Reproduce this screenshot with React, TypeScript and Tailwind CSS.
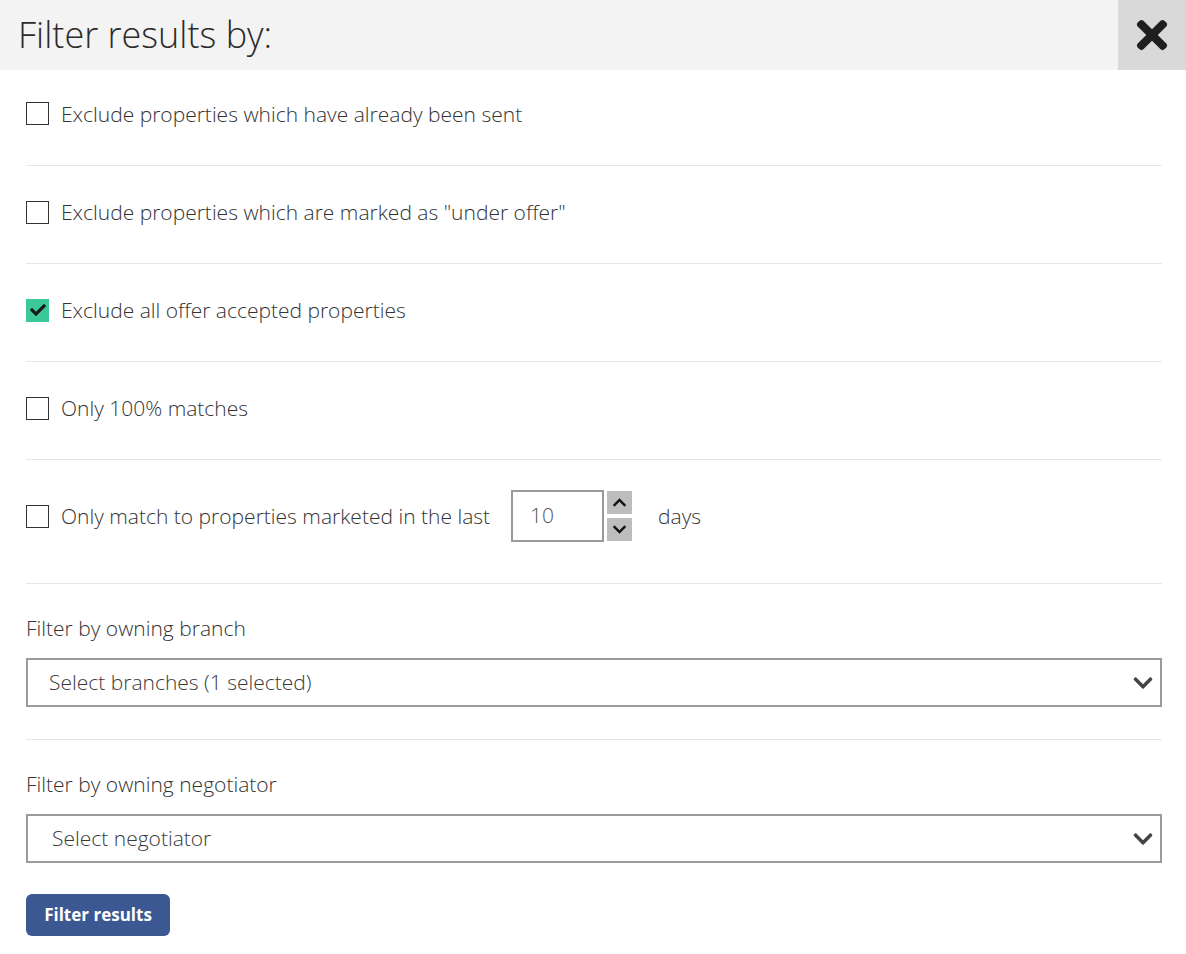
import React, { useState } from 'react';
import { FaTimes, FaChevronDown, FaChevronUp, FaCheck } from 'react-icons/fa';

const OPTIONS = [
    { id: 'sent', label: 'Exclude properties which have already been sent', checked: false },
    { id: 'offer', label: 'Exclude properties which are marked as "under offer"', checked: false },
    { id: 'accepted', label: 'Exclude all offer accepted properties', checked: true },
    { id: 'full', label: 'Only 100% matches', checked: false },
];

const Checkbox: React.FC<{ checked: boolean; onToggle: () => void }> = ({ checked, onToggle }) => (
    <button
        onClick={onToggle}
        className={`w-[23px] h-[23px] shrink-0 flex items-center justify-center ${checked
            ? 'bg-[#3cc99a]'
            : 'border-[1.5px] border-[#333] bg-white'
            }`}
    >
        {checked && <FaCheck size={16} className="text-[#1a1a1a]" />}
    </button>
);

const SelectBox: React.FC<{ text: string; pl: string }> = ({ text, pl }) => (
    <div className={`h-[49px] border-2 border-[#9a9a9a] flex items-center justify-between ${pl} pr-[6px] text-[21px] text-[#3a3a3a]`}>
        <span>{text}</span>
        <FaChevronDown size={22} className="text-[#444]" />
    </div>
);

export default function App() {
    const [checks, setChecks] = useState<Record<string, boolean>>(
        Object.fromEntries(OPTIONS.map(o => [o.id, o.checked]))
    );
    const [lastChecked, setLastChecked] = useState(false);
    const [days, setDays] = useState(10);

    const toggle = (id: string) => setChecks(c => ({ ...c, [id]: !c[id] }));

    return (
        <div className="w-[1186px] min-h-[954px] bg-white text-[#333] font-light font-['Open_Sans',sans-serif]">
            <div className="h-[70px] bg-[#f3f3f3] flex items-stretch justify-between">
                <h2 className="pl-[18px] flex items-center text-[36px] text-[#2b2b2b] font-light">Filter results by:</h2>
                <button className="w-[68px] bg-[#d9d9d9] flex items-center justify-center text-[#1f1f1f]">
                    <FaTimes size={44} />
                </button>
            </div>

            <div className="pl-[26px] pr-[24px]">
                {OPTIONS.map((o, i) => (
                    <div key={o.id} className={`border-b border-[#e6e6e6] flex items-center gap-[12px] ${i === 0 ? 'h-[96px] pb-[8px]' : 'h-[98px] pb-[5px]'}`}>
                        <Checkbox checked={checks[o.id]} onToggle={() => toggle(o.id)} />
                        <span className="text-[21px] leading-[28px] text-[#333]">{o.label}</span>
                    </div>
                ))}

                <div className="pt-[30px] pb-[41px] border-b border-[#e6e6e6] flex items-center">
                    <Checkbox checked={lastChecked} onToggle={() => setLastChecked(v => !v)} />
                    <span className="ml-[12px] text-[21px] leading-[28px]">Only match to properties marketed in the last</span>
                    <div className="ml-[21px] w-[93px] h-[52px] border-2 border-[#9a9a9a] flex items-center pl-[17px] text-[21px] text-[#555]">
                        {days}
                    </div>
                    <div className="ml-[3px] flex flex-col gap-[4px]">
                        <button onClick={() => setDays(d => d + 1)} className="w-[25px] h-[23px] bg-[#bdbdbd] flex items-center justify-center text-[#111]">
                            <FaChevronUp size={15} />
                        </button>
                        <button onClick={() => setDays(d => Math.max(0, d - 1))} className="w-[25px] h-[23px] bg-[#bdbdbd] flex items-center justify-center text-[#111]">
                            <FaChevronDown size={15} />
                        </button>
                    </div>
                    <span className="ml-[26px] text-[21px] leading-[28px]">days</span>
                </div>

                <div className="pt-[30px] pb-[32px] border-b border-[#e6e6e6]">
                    <div className="text-[21px] leading-[28px] mb-[16px]">Filter by owning branch</div>
                    <SelectBox text="Select branches (1 selected)" pl="pl-[21px]" />
                </div>

                <div className="pt-[30px]">
                    <div className="text-[21px] leading-[28px] mb-[16px]">Filter by owning negotiator</div>
                    <SelectBox text="Select negotiator" pl="pl-[24px]" />
                </div>

                <button className="mt-[31px] h-[42px] w-[144px] rounded-[6px] bg-[#3b5893] text-white text-[17px] font-bold">
                    Filter results
                </button>
            </div>
        </div>
    );
}
